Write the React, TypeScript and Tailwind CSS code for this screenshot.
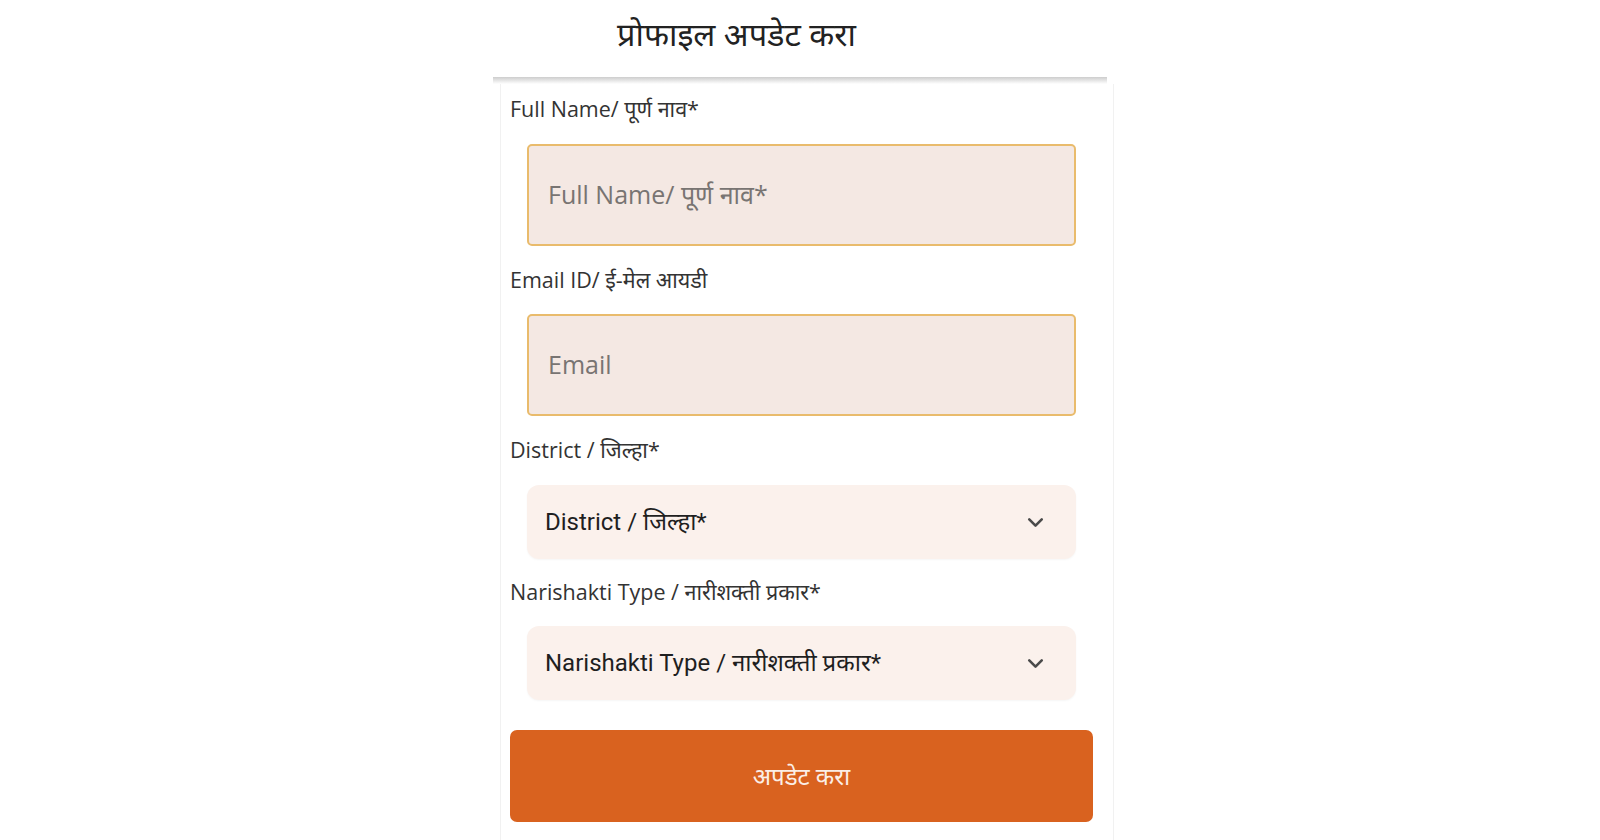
import { ChevronDown } from "lucide-react";

const label = "text-[21.5px] leading-[28px] text-[#333333]";
const labelFont = { fontFamily: '"Open Sans", "Noto Sans", "Noto Sans Devanagari", sans-serif' };

function TextField({ placeholder }: { placeholder: string }) {
  return (
    <div className="ml-[17px] w-[549px] h-[102px] rounded-[5px] border-2 border-[#e9bb6c] bg-[#f4e8e3] flex items-center pl-[19px]">
      <span className="text-[25px] text-[#787472]" style={labelFont}>
        {placeholder}
      </span>
    </div>
  );
}

function SelectField({ text }: { text: string }) {
  return (
    <div className="ml-[17px] w-[549px] h-[74px] rounded-[12px] bg-[#fbf1ec] flex items-center justify-between pl-[18px] pr-[28px] shadow-[0_1px_2px_rgba(0,0,0,0.04)]">
      <span
        className="text-[24px] text-[#1f1f1f]"
        style={{ fontFamily: 'Roboto, "Noto Sans", "Noto Sans Devanagari", sans-serif' }}
      >
        {text}
      </span>
      <ChevronDown size={25} strokeWidth={2.5} className="text-[#4a4a4a]" />
    </div>
  );
}

export default function App() {
  return (
    <div className="w-full h-[840px] bg-white overflow-hidden">
      <div className="ml-[493px] w-[630px]">
        <div className="h-[77px] pl-[124px] pt-[12px]">
          <h1 className="text-[32.5px] leading-[44px] text-[#222222] font-normal" style={labelFont}>
            प्रोफाइल अपडेट करा
          </h1>
        </div>
        <div className="w-[614px] h-[7px] bg-gradient-to-b from-[#cdcdcd] to-white" />
        <div className="ml-[7px] w-[614px] h-[760px] border-l border-r border-[#f1f1f1] pl-[9px] pt-[11px]">
          <div className={label} style={labelFont}>Full Name/ पूर्ण नाव*</div>
          <div className="mt-[21px]">
            <TextField placeholder="Full Name/ पूर्ण नाव*" />
          </div>
          <div className={`${label} mt-[20px]`} style={labelFont}>Email ID/ ई-मेल आयडी</div>
          <div className="mt-[20px]">
            <TextField placeholder="Email" />
          </div>
          <div className={`${label} mt-[20px]`} style={labelFont}>District / जिल्हा*</div>
          <div className="mt-[21px]">
            <SelectField text="District / जिल्हा*" />
          </div>
          <div className={`${label} mt-[19px]`} style={labelFont}>Narishakti Type / नारीशक्ती प्रकार*</div>
          <div className="mt-[20px]">
            <SelectField text="Narishakti Type / नारीशक्ती प्रकार*" />
          </div>
          <button
            className="mt-[30px] w-[583px] h-[92px] rounded-[7px] bg-[#d9621f] text-[24px] text-[#fbeee6] flex items-center justify-center"
            style={labelFont}
          >
            अपडेट करा
          </button>
        </div>
      </div>
    </div>
  );
}
